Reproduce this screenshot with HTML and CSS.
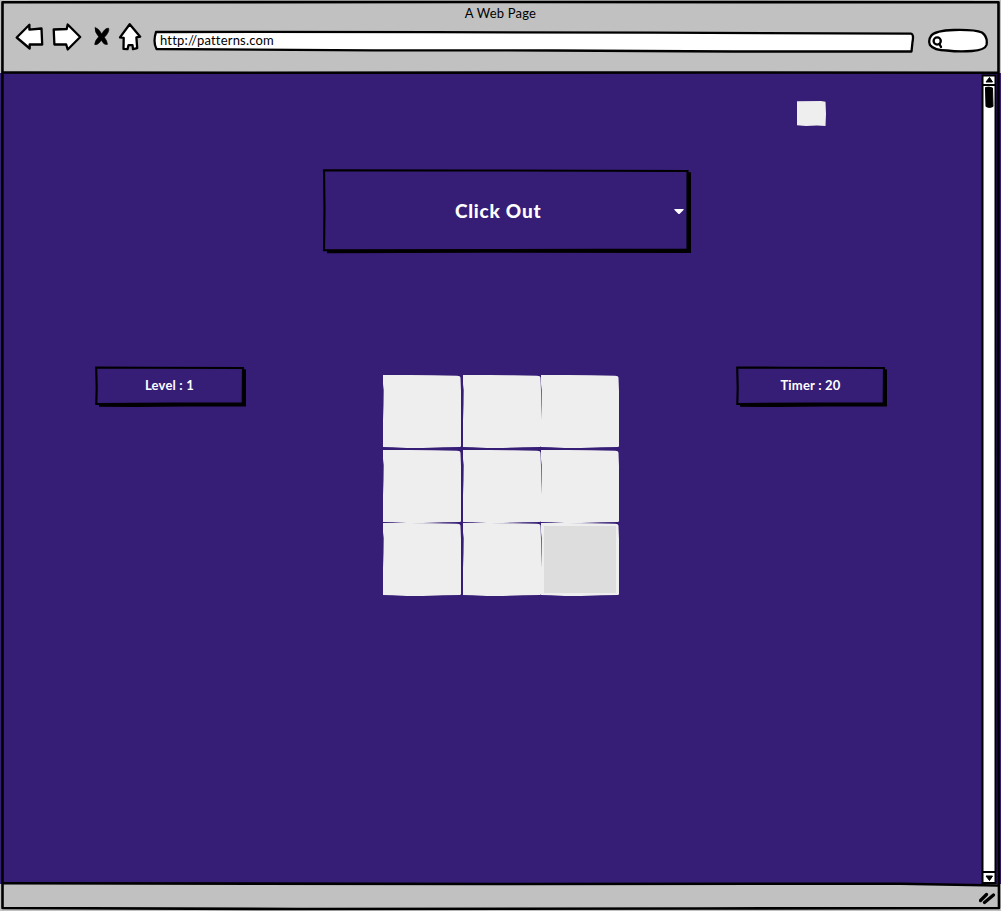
FILE: index.html
```html
<!DOCTYPE html>
<html lang="en">
<head>
<meta charset="utf-8">
<title>A Web Page</title>
<link rel="stylesheet" href="styles.css">
</head>
<body>
<svg class="defs" aria-hidden="true">
  <symbol id="tile" viewBox="0 0 78 73" preserveAspectRatio="none">
    <path d="M0 0 H26 L50 .2 L74 .7 Q77.500 .8 77.500 3 L78 16 V71 Q78 72 76.500 72 L60 72.200 L40 73 H24 L10 72.200 L0 72 V45 L.5 30 L.7 15 L0 9Z"/>
  </symbol>
  <symbol id="small-box" viewBox="0 0 151 41">
    <path class="shadow" d="M4 37 H147 V3 L151 3.500 V40.500 L90 40.500 L40 41 L4 40.700Z"/>
    <path class="outline" d="M1.200 1.500 L50 1.700 L148 2 L147.700 37.500 L80 37.500 L1.300 38 L1.700 22Z"/>
  </symbol>
</svg>
<div class="window">
  <header class="chrome">
    <div class="title">A Web Page</div>
    <div class="toolbar">
      <svg class="nav" viewBox="0 0 128 30">
        <path d="M1 14.500 L13.700 1.700 V6.700 L25.800 5.500 L26.500 21.500 L14 21.300 V25.500Z"/>
        <path d="M38 6.500 L51 6 L52 1.500 L64.500 14 L52 26.500 L50.500 21.500 L38.700 21.500Z"/>
        <path class="cross" d="M79.500 4.800 Q82.500 4.800 86 11 Q89.500 4.500 93 5.300 Q94 9 88.700 14.300 Q91.500 18 91.800 21.300 Q88.500 22.500 85.700 17.200 Q82 22.500 79 21.500 Q79 18 83 13.800 Q78.500 8.500 79.500 4.800Z"/>
        <path d="M114 1.200 L124.500 13.700 L120.700 14.400 L121.500 25.200 L117.300 26.200 L116.800 22.200 H112.800 L111.800 26.200 L107.800 25.900 L108 14.900 L104.300 14.400Z"/>
      </svg>
      <div class="address">
        <svg class="sketch" viewBox="0 0 762 22"><path d="M3 1 L100 .8 L280 1.200 L500 1.700 L758 2.700 Q761 3 759.500 11 L758.500 20.500 L580 20.500 L400 19.500 L220 19.300 L3.500 18 Q-.2 11 3 1Z"/></svg>
        <span class="url">http://patterns.com</span>
      </div>
      <svg class="search" viewBox="0 0 62 26">
        <path d="M4 8 Q8 2.500 27 2 Q48 1.500 55 4.500 Q61 9 59.500 17 Q58 22 45 23 Q32 24 20 22.500 Q7 22.500 3 17 Q1 12 4 8Z"/>
        <circle cx="10.200" cy="13" r="3.600"/><path d="M12.700 16.500 L14 19"/>
      </svg>
    </div>
  </header>
  <main class="viewport">
    <div class="page">
      <svg class="chip tile" viewBox="0 0 29 25"><path d="M0 .3 L24 0 L28.500 .800 L29 13 L28.500 25 L20 24.500 L9 25 L0 24.300Z"/></svg>
      <div class="select">
        <svg class="sketch" viewBox="0 0 368 84">
          <path class="shadow" d="M4 80 H363 V2.500 L368 3.500 V84 L160 83.800 L4 84.200Z"/>
          <path class="outline" d="M1 1.200 L160 1.500 L364.500 2 L364.500 80.500 L180 81 L1 81.200 L1.500 40Z"/>
        </svg>
        <span class="choice">Click Out</span>
        <svg class="caret" viewBox="0 0 10 5"><path d="M.5 0 H9.500 Q10 .5 9 1.500 L6 4.500 Q5 5.500 4 4.500 L1 1.500 Q0 .5 .5 0Z"/></svg>
      </div>
      <div class="game">
        <div class="label level"><svg class="sketch"><use href="#small-box"/></svg><span>Level : 1</span></div>
        <div class="board">
          <svg class="tile"><use href="#tile"/></svg><svg class="tile"><use href="#tile"/></svg><svg class="tile"><use href="#tile"/></svg>
          <svg class="tile"><use href="#tile"/></svg><svg class="tile"><use href="#tile"/></svg><svg class="tile"><use href="#tile"/></svg>
          <svg class="tile"><use href="#tile"/></svg><svg class="tile"><use href="#tile"/></svg><svg class="tile"><use href="#tile"/><rect class="pressed" x="3" y="3" width="72" height="67"/></svg>
        </div>
        <div class="label timer"><svg class="sketch"><use href="#small-box"/></svg><span>Timer : 20</span></div>
      </div>
    </div>
    <svg class="scrollbar" viewBox="0 0 20 811">
      <path d="M1.500 2.500 H14.500 V810 H1.500Z"/>
      <path d="M1.500 12 H14.500 M1.500 799 H14.500"/>
      <path class="ink" d="M8.500 4.500 L11.500 9 H5Z M5 803 H11.500 L8.500 807.500Z"/>
      <path class="ink" d="M4.500 14.500 Q8 13.500 11.500 15 L12 33.500 Q8.500 35.500 5 33.500Z"/>
    </svg>
  </main>
  <footer class="status"><svg class="grip" viewBox="0 0 18 15"><path d="M1.500 10.500 L7.500 4.500 M5.500 12.500 L14.500 5"/></svg></footer>
  <svg class="sketch frame" viewBox="0 0 1001 911">
    <path d="M2.500 2.200 L500 2 L998.500 2.200 L998.500 300 L998.300 600 L999 908 L700 908.500 L300 909 L2.500 908 L2.500 600 L2.300 200Z"/>
    <path d="M3 72.500 L250 72.800 L700 72.500 L998 72.700 M3 883.200 L500 884 L900 883.700 L998 885.500"/>
  </svg>
</div>
</body>
</html>
```
FILE: styles.css
```css
body { margin: 0; background: #361d76; font-family: Lato, "Open Sans", sans-serif; }
.defs { position: absolute; width: 0; height: 0; }
.window { position: relative; display: flex; flex-direction: column; width: 1001px; height: 911px; overflow: hidden; }
.sketch { position: absolute; inset: 0; width: 100%; height: 100%; overflow: visible; }
.frame { pointer-events: none; fill: none; stroke: #000; stroke-width: 2.6; stroke-linejoin: round; }

.chrome { height: 73px; background: #c1c1c1; color: #000; }
.title { height: 23px; padding-top: 5px; box-sizing: border-box; text-align: center; font-size: 13px; line-height: 17px; letter-spacing: .2px; }
.toolbar { display: flex; align-items: flex-start; padding-left: 15px; fill: #fff; stroke: #000; stroke-width: 2.3; stroke-linejoin: round; stroke-linecap: round; }
.nav { width: 128px; height: 30px; overflow: visible; transform: translateX(.7px); }
.cross { fill: #000; stroke-width: .6; }
.address { position: relative; width: 762px; height: 22px; margin: 8px 0 0 10px; }
.url { position: relative; display: block; padding-left: 7px; font-size: 13px; line-height: 18px; letter-spacing: .2px; }
.search { width: 62px; height: 26px; margin: 5px 0 0 12px; }

.viewport { display: flex; height: 811px; background: #361d76; }
.page { display: flex; flex-direction: column; width: 981px; }
.chip { width: 29px; height: 25px; margin: 28px 0 0 797px; }
.tile { display: block; overflow: visible; fill: #eee; }
.pressed { fill: #ddd; }
.select { position: relative; display: flex; align-items: center; width: 368px; height: 84px; margin: 43px 0 0 323px; color: #fff; }
.choice { position: relative; margin-left: 132px; font-size: 19px; font-weight: 900; line-height: 24px; letter-spacing: .75px; }
.caret { position: relative; width: 10px; height: 5px; margin: 1px 7px 0 auto; fill: #fff; }
.shadow { fill: #000; }
.outline { fill: #361d76; stroke: #000; stroke-width: 2.1; }

.game { display: flex; align-items: flex-start; margin-top: 113px; padding-left: 95px; }
.label { position: relative; width: 151px; height: 41px; color: #fff; font-size: 13px; font-weight: 700; line-height: 39px; letter-spacing: .2px; }
.label span { position: relative; display: block; text-align: center; padding-right: 2px; }
.board { display: grid; grid-template-columns: 80px 78px 78px; grid-template-rows: 75px 73px 73px; margin: 9px 117px 0 137px; }
.board .tile { width: 78px; height: 73px; }
.scrollbar { width: 20px; height: 811px; fill: #fff; stroke: #000; stroke-width: 2; }
.scrollbar .ink { fill: #000; stroke-width: 1; stroke-linejoin: round; }

.status { display: flex; justify-content: flex-end; align-items: flex-start; flex: 1; background: #c1c1c1; }
.grip { width: 18px; height: 15px; margin: 6px 4px 0 0; fill: none; stroke: #000; stroke-width: 3.2; stroke-linecap: round; }
```
